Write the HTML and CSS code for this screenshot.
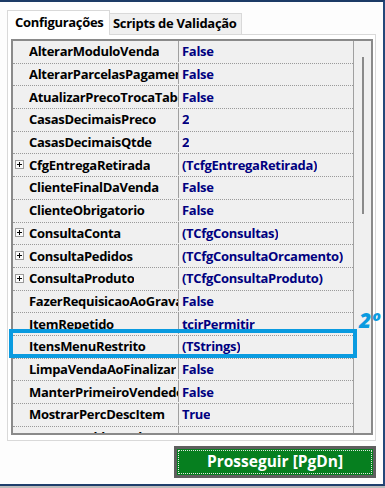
FILE: index.html
```html
<!DOCTYPE html>
<html lang="pt-BR">
<head>
  <meta charset="UTF-8" />
  <meta name="viewport" content="width=device-width, initial-scale=1.0" />
  <title>Configurações</title>
  <link rel="stylesheet" href="styles.css">
</head>
<body>
  <div class="window">
    <div class="tabs">
      <div class="tab active">Configurações</div>
      <div class="tab">Scripts de Validação</div>
    </div>

    <div class="panel">
      <div class="grid">
        <div class="rows">
          <div class="row"><div class="name"><span class="exp"></span><span class="label">AlterarModuloVenda</span></div><div class="value">False</div></div>
          <div class="row"><div class="name"><span class="exp"></span><span class="label">AlterarParcelasPagamento</span></div><div class="value">False</div></div>
          <div class="row"><div class="name"><span class="exp"></span><span class="label">AtualizarPrecoTrocaTabela</span></div><div class="value">False</div></div>
          <div class="row"><div class="name"><span class="exp"></span><span class="label">CasasDecimaisPreco</span></div><div class="value">2</div></div>
          <div class="row"><div class="name"><span class="exp"></span><span class="label">CasasDecimaisQtde</span></div><div class="value">2</div></div>
          <div class="row"><div class="name"><span class="exp plus"></span><span class="label">CfgEntregaRetirada</span></div><div class="value">(TcfgEntregaRetirada)</div></div>
          <div class="row"><div class="name"><span class="exp"></span><span class="label">ClienteFinalDaVenda</span></div><div class="value">False</div></div>
          <div class="row"><div class="name"><span class="exp"></span><span class="label">ClienteObrigatorio</span></div><div class="value">False</div></div>
          <div class="row"><div class="name"><span class="exp plus"></span><span class="label">ConsultaConta</span></div><div class="value">(TCfgConsultas)</div></div>
          <div class="row"><div class="name"><span class="exp plus"></span><span class="label">ConsultaPedidos</span></div><div class="value">(TCfgConsultaOrcamento)</div></div>
          <div class="row"><div class="name"><span class="exp plus"></span><span class="label">ConsultaProduto</span></div><div class="value">(TCfgConsultaProduto)</div></div>
          <div class="row"><div class="name"><span class="exp"></span><span class="label">FazerRequisicaoAoGravar</span></div><div class="value">False</div></div>
          <div class="row"><div class="name"><span class="exp"></span><span class="label">ItemRepetido</span></div><div class="value">tcirPermitir</div></div>
          <div class="row"><div class="name"><span class="exp"></span><span class="label">ItensMenuRestrito</span></div><div class="value">(TStrings)</div></div>
          <div class="row"><div class="name"><span class="exp"></span><span class="label">LimpaVendaAoFinalizar</span></div><div class="value">False</div></div>
          <div class="row"><div class="name"><span class="exp"></span><span class="label">ManterPrimeiroVendedor</span></div><div class="value">False</div></div>
          <div class="row"><div class="name"><span class="exp"></span><span class="label">MostrarPercDescItem</span></div><div class="value">True</div></div>
          <div class="row"><div class="name"><span class="exp"></span><span class="label">MostrarSaldoProduto</span></div><div class="value">True</div></div>
        </div>
        <div class="scrollbar"><div class="thumb"></div></div>
      </div>

      <div class="highlight"></div>
      <div class="step">2º</div>
    </div>

    <div class="footer">
      <button class="btn-next"><span>Prosseguir [PgDn]</span></button>
    </div>
  </div>
</body>
</html>
```

FILE: styles.css
```css
html, body {
  margin: 0;
  width: 385px;
  height: 488px;
  overflow: hidden;
}

body {
  font-family: 'Open Sans', 'DejaVu Sans', sans-serif;
  font-size: 13px;
  font-weight: bold;
  letter-spacing: -0.3px;
  background: #bcbcbc;
}

.window {
  box-sizing: border-box;
  height: 486px;
  padding: 8px 0 0 7px;
  background: #fdfdfd;
  border-top: 2px solid #1c3b66;
  border-right: 2px solid #24487a;
  border-bottom: 2px solid #1f3f6c;
}

/* tabs */
.tabs {
  display: flex;
  align-items: flex-end;
  height: 25px;
  margin-bottom: -1px;
  position: relative;
  z-index: 1;
}

.tab {
  box-sizing: border-box;
  height: 21px;
  width: 132px;
  margin-bottom: 1px;
  padding-left: 3px;
  line-height: 19px;
  white-space: nowrap;
  overflow: hidden;
  color: #000;
  background: #f0f0f0;
  border: 1px solid #d9d9d9;
  border-left: none;
  border-bottom: none;
}

.tab.active {
  width: 103px;
  height: 25px;
  margin-bottom: 0;
  padding-left: 7px;
  line-height: 22px;
  background: #fff;
  border-left: 1px solid #d9d9d9;
}

/* panel */
.panel {
  box-sizing: border-box;
  position: relative;
  width: 369px;
  height: 407px;
  padding: 4px 0 0 3px;
  background: #fff;
  border: 1px solid #d9d9d9;
}

.grid {
  box-sizing: border-box;
  display: flex;
  width: 362px;
  height: 396px;
  background: #f0f0f0;
  border: 2px solid #8a8a8a;
}

.rows {
  width: 340px;
  overflow: hidden;
}

.row {
  box-sizing: border-box;
  display: flex;
  height: 22.7px;
  padding-bottom: 1px;
  border-bottom: 1px dotted #9a9a9a;
}

.name {
  box-sizing: border-box;
  display: flex;
  align-items: center;
  width: 166px;
  flex-shrink: 0;
  padding-left: 2px;
  overflow: hidden;
  color: #000;
  border-right: 1px solid #a0a0a0;
}

.label {
  white-space: nowrap;
  overflow: hidden;
}

.exp {
  box-sizing: border-box;
  flex-shrink: 0;
  width: 9px;
  height: 9px;
  margin-right: 5px;
  position: relative;
}

.exp.plus {
  border: 1px solid #9a9a9a;
  background: #fbfbfb;
}

.exp.plus::before,
.exp.plus::after {
  content: '';
  position: absolute;
  background: #000;
}

.exp.plus::before {
  left: 1px;
  top: 3px;
  width: 5px;
  height: 1px;
}

.exp.plus::after {
  left: 3px;
  top: 1px;
  width: 1px;
  height: 5px;
}

.value {
  display: flex;
  align-items: center;
  padding-left: 3px;
  overflow: hidden;
  white-space: nowrap;
  color: #000080;
}

.scrollbar {
  width: 17px;
  border-left: 1px solid #a0a0a0;
}

.thumb {
  width: 2px;
  height: 157px;
  margin: 16px 0 0 8px;
  background: #8a8a8a;
}

/* annotation over the grid */
.highlight {
  position: absolute;
  left: 1px;
  top: 294px;
  width: 348px;
  height: 29px;
  box-sizing: border-box;
  border: 4px solid #0a9be0;
}

.step {
  position: absolute;
  left: 351px;
  top: 271px;
  font-size: 21px;
  font-style: italic;
  font-weight: 800;
  letter-spacing: 0;
  color: #0a9be0;
}

/* footer */
.footer {
  display: flex;
  justify-content: flex-end;
  margin-top: 5px;
  padding-right: 7px;
}

.btn-next {
  box-sizing: border-box;
  width: 202px;
  height: 32px;
  padding: 1px;
  font-family: 'Open Sans', 'DejaVu Sans', sans-serif;
  font-size: 15.5px;
  font-weight: bold;
  letter-spacing: 0;
  color: #fff;
  background: #067f1f;
  border: 3px solid #5f5f5f;
}

.btn-next span {
  display: flex;
  align-items: center;
  justify-content: center;
  height: 100%;
  padding-bottom: 2px;
  box-sizing: border-box;
  border: 1px dotted #e6e6e6;
}
```
